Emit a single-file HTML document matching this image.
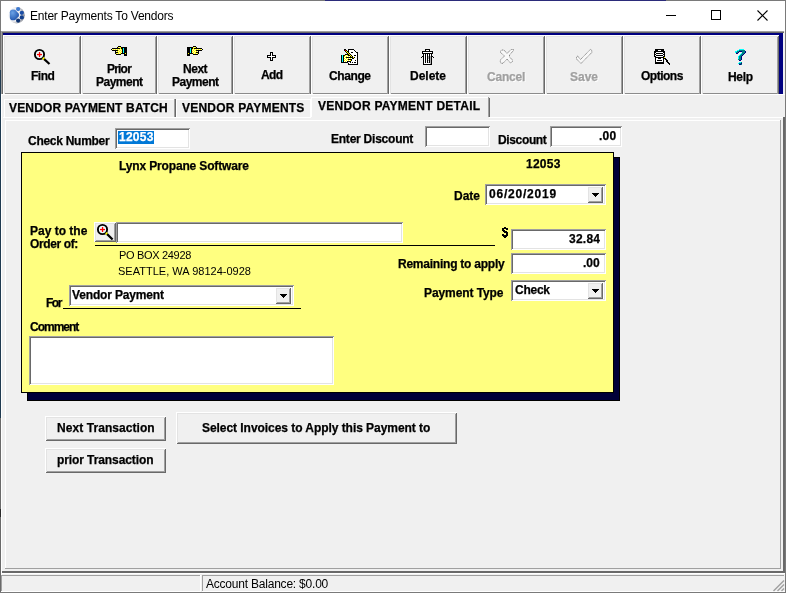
<!DOCTYPE html>
<html><head><meta charset="utf-8"><style>
html,body{margin:0;padding:0;width:786px;height:593px;overflow:hidden;background:#f0f0f0}
.a{position:absolute;box-sizing:border-box}
.t{position:absolute;will-change:transform;white-space:nowrap;font-family:"Liberation Sans",sans-serif;line-height:14px}
svg.a{overflow:visible}
</style></head><body>
<div class="a" style="left:0px;top:0px;width:786px;height:593px;background:#f0f0f0;"></div>
<div class="a" style="left:0px;top:0px;width:786px;height:31px;background:#fff;"></div>
<div class="a" style="left:0px;top:0px;width:786px;height:1px;background:#7a7a7a;"></div>
<div class="a" style="left:325px;top:0px;width:341px;height:1px;background:#2b2b7a;"></div>
<div class="a" style="left:0px;top:0px;width:1px;height:593px;background:#6a6a6a;"></div>
<div class="a" style="left:0px;top:70px;width:1px;height:348px;background:#1f3a50;"></div>
<div class="a" style="left:0px;top:509px;width:1px;height:8px;background:#2a2a2a;"></div>
<div class="a" style="left:0px;top:0px;width:1px;height:31px;background:#7a7a7a;"></div>
<div class="a" style="left:785px;top:0px;width:1px;height:593px;background:#7a7a7a;"></div>
<svg class="a" style="left:0;top:0" width="30" height="30">
<defs><radialGradient id="g1" cx="0.3" cy="0.3" r="0.8"><stop offset="0" stop-color="#6aa2e6"/><stop offset="1" stop-color="#1a4ea8"/></radialGradient>
<radialGradient id="g2" cx="0.3" cy="0.45" r="0.75"><stop offset="0" stop-color="#ffffff"/><stop offset="0.55" stop-color="#f0f0f2"/><stop offset="1" stop-color="#7a7e88"/></radialGradient></defs>
<circle cx="16.6" cy="15.2" r="8.2" fill="url(#g2)"/>
<path d="M9.8 12.2 Q10 9.6 13 9.6 L15.2 9.8 L18.6 13.6 Q19.6 15 18.6 16.6 L15.2 20 Q13 20.6 11 20.1 Q9.8 19.2 9.8 17z" fill="url(#g1)"/>
<circle cx="18.1" cy="9.1" r="2.1" fill="#3f7ad0"/>
<circle cx="21.8" cy="12.8" r="2.1" fill="#1c4ea6"/>
<circle cx="21.8" cy="17.4" r="2.1" fill="#123e8c"/>
<circle cx="18.1" cy="20.6" r="2.1" fill="#0c3272"/>
</svg>
<div class="t" style="left:0;top:0"></div>
<svg class="a" style="left:660px;top:6px" width="120" height="20" shape-rendering="crispEdges"><rect x="6" y="9" width="10" height="1" fill="#000"/><rect x="51.5" y="4.5" width="9" height="9" fill="none" stroke="#000" stroke-width="1"/></svg>
<svg class="a" style="left:752px;top:6px" width="20" height="20"><path d="M5.5 4.5 L15.5 14.5 M15.5 4.5 L5.5 14.5" stroke="#000" stroke-width="1.1"/></svg>
<div class="a" style="left:1px;top:31px;width:783px;height:1px;background:#a0a0a0;"></div>
<div class="a" style="left:1px;top:32px;width:783px;height:1px;background:#696969;"></div>
<div class="a" style="left:1px;top:31px;width:1px;height:63px;background:#a0a0a0;"></div>
<div class="a" style="left:2px;top:32px;width:1px;height:62px;background:#696969;"></div>
<div class="a" style="left:3px;top:33px;width:780px;height:61px;background:#000080;"></div>
<div class="a" style="left:3px;top:35px;width:78px;height:59px;background:#f0f0f0;box-shadow:inset 1px 1px 0 #fff, inset -1px 0 0 #696969, inset 2px 2px 0 #e3e3e3, inset -2px 0 0 #a0a0a0, inset 0 -1px 0 #8c8c8c"></div>
<div class="a" style="left:81px;top:35px;width:76px;height:59px;background:#f0f0f0;box-shadow:inset 1px 1px 0 #fff, inset -1px 0 0 #696969, inset 2px 2px 0 #e3e3e3, inset -2px 0 0 #a0a0a0, inset 0 -1px 0 #8c8c8c"></div>
<div class="a" style="left:157px;top:35px;width:76px;height:59px;background:#f0f0f0;box-shadow:inset 1px 1px 0 #fff, inset -1px 0 0 #696969, inset 2px 2px 0 #e3e3e3, inset -2px 0 0 #a0a0a0, inset 0 -1px 0 #8c8c8c"></div>
<div class="a" style="left:233px;top:35px;width:78px;height:59px;background:#f0f0f0;box-shadow:inset 1px 1px 0 #fff, inset -1px 0 0 #696969, inset 2px 2px 0 #e3e3e3, inset -2px 0 0 #a0a0a0, inset 0 -1px 0 #8c8c8c"></div>
<div class="a" style="left:311px;top:35px;width:78px;height:59px;background:#f0f0f0;box-shadow:inset 1px 1px 0 #fff, inset -1px 0 0 #696969, inset 2px 2px 0 #e3e3e3, inset -2px 0 0 #a0a0a0, inset 0 -1px 0 #8c8c8c"></div>
<div class="a" style="left:389px;top:35px;width:78px;height:59px;background:#f0f0f0;box-shadow:inset 1px 1px 0 #fff, inset -1px 0 0 #696969, inset 2px 2px 0 #e3e3e3, inset -2px 0 0 #a0a0a0, inset 0 -1px 0 #8c8c8c"></div>
<div class="a" style="left:467px;top:35px;width:78px;height:59px;background:#f0f0f0;box-shadow:inset 1px 1px 0 #fff, inset -1px 0 0 #696969, inset 2px 2px 0 #e3e3e3, inset -2px 0 0 #a0a0a0, inset 0 -1px 0 #8c8c8c"></div>
<div class="a" style="left:545px;top:35px;width:78px;height:59px;background:#f0f0f0;box-shadow:inset 1px 1px 0 #fff, inset -1px 0 0 #696969, inset 2px 2px 0 #e3e3e3, inset -2px 0 0 #a0a0a0, inset 0 -1px 0 #8c8c8c"></div>
<div class="a" style="left:623px;top:35px;width:78px;height:59px;background:#f0f0f0;box-shadow:inset 1px 1px 0 #fff, inset -1px 0 0 #696969, inset 2px 2px 0 #e3e3e3, inset -2px 0 0 #a0a0a0, inset 0 -1px 0 #8c8c8c"></div>
<div class="a" style="left:701px;top:35px;width:78px;height:59px;background:#f0f0f0;box-shadow:inset 1px 1px 0 #fff, inset -1px 0 0 #696969, inset 2px 2px 0 #e3e3e3, inset -2px 0 0 #a0a0a0, inset 0 -1px 0 #8c8c8c"></div>
<div class="a" style="left:1px;top:94px;width:784px;height:1px;background:#fff;"></div>
<div class="a" style="left:783px;top:33px;width:2px;height:61px;background:#f0f0f0;"></div>
<div class="a" style="left:1px;top:95px;width:1px;height:498px;background:#fff;"></div>
<div class="a" style="left:4px;top:99px;width:171px;height:18px;box-shadow:inset 1px 1px 0 #fff"></div>
<div class="a" style="left:174px;top:99px;width:1px;height:18px;background:#a0a0a0;"></div>
<div class="a" style="left:175px;top:99px;width:1px;height:18px;background:#696969;"></div>
<div class="a" style="left:176px;top:99px;width:135px;height:19px;box-shadow:inset 1px 1px 0 #fff, inset -1px -1px 0 #fff"></div>
<div class="a" style="left:311px;top:97px;width:1px;height:20px;background:#fff;"></div>
<div class="a" style="left:311px;top:97px;width:178px;height:1px;background:#fff;"></div>
<div class="a" style="left:488px;top:97px;width:1px;height:20px;background:#a0a0a0;"></div>
<div class="a" style="left:489px;top:98px;width:1px;height:19px;background:#696969;"></div>
<div class="a" style="left:489px;top:117px;width:295px;height:1px;background:#fff;"></div>
<div class="a" style="left:2px;top:117px;width:309px;height:1px;background:#fff;"></div>
<div class="a" style="left:2px;top:117px;width:1px;height:456px;background:#f0f0f0;"></div>
<div class="a" style="left:2px;top:571px;width:783px;height:2px;background:#696969;"></div>
<div class="a" style="left:783px;top:117px;width:2px;height:456px;background:#696969;"></div>
<div class="a" style="left:5px;top:120px;width:776px;height:1px;background:#fff;"></div>
<div class="a" style="left:5px;top:120px;width:1px;height:449px;background:#fff;"></div>
<div class="a" style="left:5px;top:568px;width:776px;height:1px;background:#a0a0a0;"></div>
<div class="a" style="left:780px;top:120px;width:1px;height:449px;background:#a0a0a0;"></div>
<div class="a" style="left:115px;top:128px;width:75px;height:21px;background:#fff;box-shadow:inset 1px 1px 0 #a0a0a0, inset -1px -1px 0 #fff, inset 2px 2px 0 #696969, inset -2px -2px 0 #e3e3e3"></div>
<div class="a" style="left:118px;top:131px;width:36px;height:13px;background:#0078d7;"></div>
<div class="a" style="left:425px;top:126px;width:65px;height:21px;background:#fff;box-shadow:inset 1px 1px 0 #a0a0a0, inset -1px -1px 0 #fff, inset 2px 2px 0 #696969, inset -2px -2px 0 #e3e3e3"></div>
<div class="a" style="left:550px;top:126px;width:72px;height:21px;background:#fff;box-shadow:inset 1px 1px 0 #a0a0a0, inset -1px -1px 0 #fff, inset 2px 2px 0 #696969, inset -2px -2px 0 #e3e3e3"></div>
<div class="a" style="left:27px;top:157px;width:593px;height:244px;background:#000038;border:1px solid #000;box-sizing:border-box"></div>
<div class="a" style="left:21px;top:152px;width:593px;height:241px;background:#ffff80;border:1px solid #000;box-sizing:border-box"></div>
<div class="a" style="left:485px;top:184px;width:121px;height:21px;background:#fff;box-shadow:inset 1px 1px 0 #a0a0a0, inset -1px -1px 0 #fff, inset 2px 2px 0 #696969, inset -2px -2px 0 #e3e3e3"></div><div class="a" style="left:587px;top:186px;width:16px;height:17px;background:#f0f0f0;box-shadow:inset 1px 1px 0 #fff, inset -1px -1px 0 #696969, inset 2px 2px 0 #e3e3e3, inset -2px -2px 0 #a0a0a0"></div><svg class="a" style="left:587px;top:186px" width="16" height="17" shape-rendering="crispEdges"><path d="M4.5 7h7v1h-1v1h-1v1h-1v1h-1v-1h-1v-1h-1v-1h-1z" fill="#000"/></svg>
<div class="a" style="left:94px;top:222px;width:22px;height:20px;background:#f0f0f0;box-shadow:inset 1px 1px 0 #fff, inset -1px -1px 0 #696969, inset 2px 2px 0 #e3e3e3, inset -2px -2px 0 #a0a0a0"></div>
<div class="a" style="left:116px;top:222px;width:287px;height:21px;background:#fff;box-shadow:inset 1px 1px 0 #a0a0a0, inset -1px -1px 0 #fff, inset 2px 2px 0 #696969, inset -2px -2px 0 #e3e3e3"></div>
<div class="a" style="left:95px;top:245px;width:400px;height:1px;background:#000;"></div>
<svg class="a" style="left:502px;top:227px" width="6" height="11" shape-rendering="crispEdges"><rect x="2" y="0" width="1" height="1"/><rect x="3" y="0" width="1" height="1"/><rect x="0" y="1" width="1" height="1"/><rect x="1" y="1" width="1" height="1"/><rect x="2" y="1" width="1" height="1"/><rect x="3" y="1" width="1" height="1"/><rect x="4" y="1" width="1" height="1"/><rect x="5" y="1" width="1" height="1"/><rect x="0" y="2" width="1" height="1"/><rect x="1" y="2" width="1" height="1"/><rect x="4" y="2" width="1" height="1"/><rect x="5" y="2" width="1" height="1"/><rect x="0" y="3" width="1" height="1"/><rect x="1" y="3" width="1" height="1"/><rect x="2" y="3" width="1" height="1"/><rect x="1" y="4" width="1" height="1"/><rect x="2" y="4" width="1" height="1"/><rect x="3" y="4" width="1" height="1"/><rect x="4" y="4" width="1" height="1"/><rect x="2" y="5" width="1" height="1"/><rect x="3" y="5" width="1" height="1"/><rect x="4" y="5" width="1" height="1"/><rect x="5" y="5" width="1" height="1"/><rect x="4" y="6" width="1" height="1"/><rect x="5" y="6" width="1" height="1"/><rect x="0" y="7" width="1" height="1"/><rect x="1" y="7" width="1" height="1"/><rect x="4" y="7" width="1" height="1"/><rect x="5" y="7" width="1" height="1"/><rect x="0" y="8" width="1" height="1"/><rect x="1" y="8" width="1" height="1"/><rect x="2" y="8" width="1" height="1"/><rect x="3" y="8" width="1" height="1"/><rect x="4" y="8" width="1" height="1"/><rect x="5" y="8" width="1" height="1"/><rect x="1" y="9" width="1" height="1"/><rect x="2" y="9" width="1" height="1"/><rect x="3" y="9" width="1" height="1"/><rect x="4" y="9" width="1" height="1"/><rect x="2" y="10" width="1" height="1"/><rect x="3" y="10" width="1" height="1"/></svg>
<div class="a" style="left:511px;top:229px;width:95px;height:21px;background:#fff;box-shadow:inset 1px 1px 0 #a0a0a0, inset -1px -1px 0 #fff, inset 2px 2px 0 #696969, inset -2px -2px 0 #e3e3e3"></div>
<div class="a" style="left:511px;top:253px;width:95px;height:21px;background:#fff;box-shadow:inset 1px 1px 0 #a0a0a0, inset -1px -1px 0 #fff, inset 2px 2px 0 #696969, inset -2px -2px 0 #e3e3e3"></div>
<div class="a" style="left:511px;top:280px;width:95px;height:21px;background:#fff;box-shadow:inset 1px 1px 0 #a0a0a0, inset -1px -1px 0 #fff, inset 2px 2px 0 #696969, inset -2px -2px 0 #e3e3e3"></div><div class="a" style="left:587px;top:282px;width:16px;height:17px;background:#f0f0f0;box-shadow:inset 1px 1px 0 #fff, inset -1px -1px 0 #696969, inset 2px 2px 0 #e3e3e3, inset -2px -2px 0 #a0a0a0"></div><svg class="a" style="left:587px;top:282px" width="16" height="17" shape-rendering="crispEdges"><path d="M4.5 7h7v1h-1v1h-1v1h-1v1h-1v-1h-1v-1h-1v-1h-1z" fill="#000"/></svg>
<div class="a" style="left:69px;top:285px;width:225px;height:21px;background:#fff;box-shadow:inset 1px 1px 0 #a0a0a0, inset -1px -1px 0 #fff, inset 2px 2px 0 #696969, inset -2px -2px 0 #e3e3e3"></div><div class="a" style="left:275px;top:287px;width:16px;height:17px;background:#f0f0f0;box-shadow:inset 1px 1px 0 #fff, inset -1px -1px 0 #696969, inset 2px 2px 0 #e3e3e3, inset -2px -2px 0 #a0a0a0"></div><svg class="a" style="left:275px;top:287px" width="16" height="17" shape-rendering="crispEdges"><path d="M4.5 7h7v1h-1v1h-1v1h-1v1h-1v-1h-1v-1h-1v-1h-1z" fill="#000"/></svg>
<div class="a" style="left:63px;top:308px;width:238px;height:1px;background:#000;"></div>
<div class="a" style="left:29px;top:336px;width:305px;height:49px;background:#fff;box-shadow:inset 1px 1px 0 #a0a0a0, inset -1px -1px 0 #fff, inset 2px 2px 0 #696969, inset -2px -2px 0 #e3e3e3"></div>
<div class="a" style="left:45px;top:416px;width:121px;height:25px;background:#f0f0f0;box-shadow:inset 1px 1px 0 #fff, inset -1px -1px 0 #696969, inset 2px 2px 0 #e3e3e3, inset -2px -2px 0 #a0a0a0"></div>
<div class="a" style="left:45px;top:448px;width:121px;height:25px;background:#f0f0f0;box-shadow:inset 1px 1px 0 #fff, inset -1px -1px 0 #696969, inset 2px 2px 0 #e3e3e3, inset -2px -2px 0 #a0a0a0"></div>
<div class="a" style="left:176px;top:412px;width:281px;height:32px;background:#f0f0f0;box-shadow:inset 1px 1px 0 #fff, inset -1px -1px 0 #696969, inset 2px 2px 0 #e3e3e3, inset -2px -2px 0 #a0a0a0"></div>
<div class="a" style="left:1px;top:573px;width:784px;height:1px;background:#fff;"></div>
<div class="a" style="left:1px;top:575px;width:200px;height:1px;background:#a0a0a0;"></div>
<div class="a" style="left:1px;top:575px;width:1px;height:17px;background:#a0a0a0;"></div>
<div class="a" style="left:1px;top:591px;width:200px;height:1px;background:#fff;"></div>
<div class="a" style="left:200px;top:575px;width:1px;height:17px;background:#fff;"></div>
<div class="a" style="left:202px;top:575px;width:582px;height:1px;background:#a0a0a0;"></div>
<div class="a" style="left:202px;top:575px;width:1px;height:17px;background:#a0a0a0;"></div>
<div class="a" style="left:202px;top:591px;width:583px;height:1px;background:#fff;"></div>
<div class="a" style="left:0px;top:592px;width:786px;height:1px;background:#7a7a7a;"></div>
<svg class="a" style="left:0;top:0" width="786" height="593"><path d="M773.5 591 L784 580.5 M777.5 591 L784 584.5 M781.5 591 L784 588.5" stroke="#a0a0a0" stroke-width="1.4"/></svg>
<svg class="a" style="left:0;top:0" width="786" height="593" shape-rendering="crispEdges"></svg><svg class="a" style="left:0;top:0" width="786" height="593"><circle cx="39.5" cy="54.5" r="4.6" fill="#eefafa" stroke="#000" stroke-width="1.9"/><rect x="37.0" y="53.9" width="5" height="1.3" fill="#ff0000"/><rect x="38.9" y="52.0" width="1.3" height="5" fill="#ff0000"/><path d="M43.1 58.1 L49.5 64" stroke="#000" stroke-width="2.2"/><path d="M42.9 57.9 L44.1 59.1" stroke="#ffff00" stroke-width="2.2"/></svg><svg class="a" style="left:0;top:0" width="786" height="593" shape-rendering="crispEdges"></svg><svg class="a" style="left:0;top:0" width="786" height="593"><circle cx="102.5" cy="229.5" r="4.6" fill="#eefafa" stroke="#000" stroke-width="1.9"/><rect x="100.0" y="228.9" width="5" height="1.3" fill="#ff0000"/><rect x="101.9" y="227.0" width="1.3" height="5" fill="#ff0000"/><path d="M106.1 233.1 L112.6 239.5" stroke="#000" stroke-width="2.2"/><path d="M105.9 232.9 L107.1 234.1" stroke="#ffff00" stroke-width="2.2"/></svg><svg class="a" style="left:0;top:0" width="786" height="593" shape-rendering="crispEdges"><rect x="193" y="46" width="1" height="1" fill="#000"/><rect x="194" y="46" width="1" height="1" fill="#000"/><rect x="195" y="46" width="1" height="1" fill="#000"/><rect x="187" y="47" width="1" height="1" fill="#000"/><rect x="188" y="47" width="1" height="1" fill="#000"/><rect x="189" y="47" width="1" height="1" fill="#000"/><rect x="190" y="47" width="1" height="1" fill="#000"/><rect x="191" y="47" width="1" height="1" fill="#000"/><rect x="192" y="47" width="1" height="1" fill="#000"/><rect x="193" y="47" width="1" height="1" fill="#ffff00"/><rect x="194" y="47" width="1" height="1" fill="#fff8b0"/><rect x="195" y="47" width="1" height="1" fill="#ffff00"/><rect x="196" y="47" width="1" height="1" fill="#000"/><rect x="187" y="48" width="1" height="1" fill="#000"/><rect x="188" y="48" width="1" height="1" fill="#000"/><rect x="189" y="48" width="1" height="1" fill="#000"/><rect x="190" y="48" width="1" height="1" fill="#00ffff"/><rect x="191" y="48" width="1" height="1" fill="#000"/><rect x="192" y="48" width="1" height="1" fill="#000"/><rect x="193" y="48" width="1" height="1" fill="#ffff00"/><rect x="194" y="48" width="1" height="1" fill="#000"/><rect x="195" y="48" width="1" height="1" fill="#000"/><rect x="196" y="48" width="1" height="1" fill="#000"/><rect x="197" y="48" width="1" height="1" fill="#000"/><rect x="198" y="48" width="1" height="1" fill="#000"/><rect x="199" y="48" width="1" height="1" fill="#000"/><rect x="200" y="48" width="1" height="1" fill="#000"/><rect x="201" y="48" width="1" height="1" fill="#000"/><rect x="187" y="49" width="1" height="1" fill="#000"/><rect x="188" y="49" width="1" height="1" fill="#000"/><rect x="189" y="49" width="1" height="1" fill="#000"/><rect x="190" y="49" width="1" height="1" fill="#00ffff"/><rect x="191" y="49" width="1" height="1" fill="#000"/><rect x="192" y="49" width="1" height="1" fill="#ffff00"/><rect x="193" y="49" width="1" height="1" fill="#fff8b0"/><rect x="194" y="49" width="1" height="1" fill="#ffff00"/><rect x="195" y="49" width="1" height="1" fill="#fff8b0"/><rect x="196" y="49" width="1" height="1" fill="#ffff00"/><rect x="197" y="49" width="1" height="1" fill="#fff8b0"/><rect x="198" y="49" width="1" height="1" fill="#ffff00"/><rect x="199" y="49" width="1" height="1" fill="#fff8b0"/><rect x="200" y="49" width="1" height="1" fill="#ffff00"/><rect x="201" y="49" width="1" height="1" fill="#fff8b0"/><rect x="202" y="49" width="1" height="1" fill="#000"/><rect x="187" y="50" width="1" height="1" fill="#000"/><rect x="188" y="50" width="1" height="1" fill="#000"/><rect x="189" y="50" width="1" height="1" fill="#000"/><rect x="190" y="50" width="1" height="1" fill="#00ffff"/><rect x="191" y="50" width="1" height="1" fill="#000"/><rect x="192" y="50" width="1" height="1" fill="#fff8b0"/><rect x="193" y="50" width="1" height="1" fill="#ffff00"/><rect x="194" y="50" width="1" height="1" fill="#fff8b0"/><rect x="195" y="50" width="1" height="1" fill="#ffff00"/><rect x="196" y="50" width="1" height="1" fill="#000"/><rect x="197" y="50" width="1" height="1" fill="#000"/><rect x="198" y="50" width="1" height="1" fill="#000"/><rect x="199" y="50" width="1" height="1" fill="#000"/><rect x="200" y="50" width="1" height="1" fill="#000"/><rect x="201" y="50" width="1" height="1" fill="#000"/><rect x="187" y="51" width="1" height="1" fill="#000"/><rect x="188" y="51" width="1" height="1" fill="#000"/><rect x="189" y="51" width="1" height="1" fill="#000"/><rect x="190" y="51" width="1" height="1" fill="#00ffff"/><rect x="191" y="51" width="1" height="1" fill="#000"/><rect x="192" y="51" width="1" height="1" fill="#ffff00"/><rect x="193" y="51" width="1" height="1" fill="#fff8b0"/><rect x="194" y="51" width="1" height="1" fill="#ffff00"/><rect x="195" y="51" width="1" height="1" fill="#fff8b0"/><rect x="196" y="51" width="1" height="1" fill="#ffff00"/><rect x="197" y="51" width="1" height="1" fill="#fff8b0"/><rect x="198" y="51" width="1" height="1" fill="#000"/><rect x="187" y="52" width="1" height="1" fill="#000"/><rect x="188" y="52" width="1" height="1" fill="#000"/><rect x="189" y="52" width="1" height="1" fill="#000"/><rect x="190" y="52" width="1" height="1" fill="#00ffff"/><rect x="191" y="52" width="1" height="1" fill="#000"/><rect x="192" y="52" width="1" height="1" fill="#fff8b0"/><rect x="193" y="52" width="1" height="1" fill="#ffff00"/><rect x="194" y="52" width="1" height="1" fill="#fff8b0"/><rect x="195" y="52" width="1" height="1" fill="#ffff00"/><rect x="196" y="52" width="1" height="1" fill="#000"/><rect x="197" y="52" width="1" height="1" fill="#000"/><rect x="198" y="52" width="1" height="1" fill="#000"/><rect x="187" y="53" width="1" height="1" fill="#000"/><rect x="188" y="53" width="1" height="1" fill="#ffff00"/><rect x="189" y="53" width="1" height="1" fill="#000"/><rect x="190" y="53" width="1" height="1" fill="#000"/><rect x="191" y="53" width="1" height="1" fill="#000"/><rect x="192" y="53" width="1" height="1" fill="#000"/><rect x="193" y="53" width="1" height="1" fill="#ffff00"/><rect x="194" y="53" width="1" height="1" fill="#fff8b0"/><rect x="195" y="53" width="1" height="1" fill="#ffff00"/><rect x="196" y="53" width="1" height="1" fill="#fff8b0"/><rect x="197" y="53" width="1" height="1" fill="#ffff00"/><rect x="198" y="53" width="1" height="1" fill="#000"/><rect x="187" y="54" width="1" height="1" fill="#000"/><rect x="188" y="54" width="1" height="1" fill="#000"/><rect x="189" y="54" width="1" height="1" fill="#000"/><rect x="193" y="54" width="1" height="1" fill="#000"/><rect x="194" y="54" width="1" height="1" fill="#000"/><rect x="195" y="54" width="1" height="1" fill="#000"/><rect x="196" y="54" width="1" height="1" fill="#000"/><rect x="197" y="54" width="1" height="1" fill="#000"/><rect x="187" y="55" width="1" height="1" fill="#000"/><rect x="188" y="55" width="1" height="1" fill="#000"/><rect x="189" y="55" width="1" height="1" fill="#000"/><rect x="118" y="46" width="1" height="1" fill="#000"/><rect x="119" y="46" width="1" height="1" fill="#000"/><rect x="120" y="46" width="1" height="1" fill="#000"/><rect x="117" y="47" width="1" height="1" fill="#000"/><rect x="118" y="47" width="1" height="1" fill="#ffff00"/><rect x="119" y="47" width="1" height="1" fill="#fff8b0"/><rect x="120" y="47" width="1" height="1" fill="#ffff00"/><rect x="121" y="47" width="1" height="1" fill="#000"/><rect x="122" y="47" width="1" height="1" fill="#000"/><rect x="123" y="47" width="1" height="1" fill="#000"/><rect x="124" y="47" width="1" height="1" fill="#000"/><rect x="125" y="47" width="1" height="1" fill="#000"/><rect x="126" y="47" width="1" height="1" fill="#000"/><rect x="112" y="48" width="1" height="1" fill="#000"/><rect x="113" y="48" width="1" height="1" fill="#000"/><rect x="114" y="48" width="1" height="1" fill="#000"/><rect x="115" y="48" width="1" height="1" fill="#000"/><rect x="116" y="48" width="1" height="1" fill="#000"/><rect x="117" y="48" width="1" height="1" fill="#000"/><rect x="118" y="48" width="1" height="1" fill="#000"/><rect x="119" y="48" width="1" height="1" fill="#000"/><rect x="120" y="48" width="1" height="1" fill="#ffff00"/><rect x="121" y="48" width="1" height="1" fill="#000"/><rect x="122" y="48" width="1" height="1" fill="#000"/><rect x="123" y="48" width="1" height="1" fill="#00ffff"/><rect x="124" y="48" width="1" height="1" fill="#000"/><rect x="125" y="48" width="1" height="1" fill="#000"/><rect x="126" y="48" width="1" height="1" fill="#000"/><rect x="111" y="49" width="1" height="1" fill="#000"/><rect x="112" y="49" width="1" height="1" fill="#fff8b0"/><rect x="113" y="49" width="1" height="1" fill="#ffff00"/><rect x="114" y="49" width="1" height="1" fill="#fff8b0"/><rect x="115" y="49" width="1" height="1" fill="#ffff00"/><rect x="116" y="49" width="1" height="1" fill="#fff8b0"/><rect x="117" y="49" width="1" height="1" fill="#ffff00"/><rect x="118" y="49" width="1" height="1" fill="#fff8b0"/><rect x="119" y="49" width="1" height="1" fill="#ffff00"/><rect x="120" y="49" width="1" height="1" fill="#fff8b0"/><rect x="121" y="49" width="1" height="1" fill="#ffff00"/><rect x="122" y="49" width="1" height="1" fill="#000"/><rect x="123" y="49" width="1" height="1" fill="#00ffff"/><rect x="124" y="49" width="1" height="1" fill="#000"/><rect x="125" y="49" width="1" height="1" fill="#000"/><rect x="126" y="49" width="1" height="1" fill="#000"/><rect x="112" y="50" width="1" height="1" fill="#000"/><rect x="113" y="50" width="1" height="1" fill="#000"/><rect x="114" y="50" width="1" height="1" fill="#000"/><rect x="115" y="50" width="1" height="1" fill="#000"/><rect x="116" y="50" width="1" height="1" fill="#000"/><rect x="117" y="50" width="1" height="1" fill="#000"/><rect x="118" y="50" width="1" height="1" fill="#ffff00"/><rect x="119" y="50" width="1" height="1" fill="#fff8b0"/><rect x="120" y="50" width="1" height="1" fill="#ffff00"/><rect x="121" y="50" width="1" height="1" fill="#fff8b0"/><rect x="122" y="50" width="1" height="1" fill="#000"/><rect x="123" y="50" width="1" height="1" fill="#00ffff"/><rect x="124" y="50" width="1" height="1" fill="#000"/><rect x="125" y="50" width="1" height="1" fill="#000"/><rect x="126" y="50" width="1" height="1" fill="#000"/><rect x="115" y="51" width="1" height="1" fill="#000"/><rect x="116" y="51" width="1" height="1" fill="#fff8b0"/><rect x="117" y="51" width="1" height="1" fill="#ffff00"/><rect x="118" y="51" width="1" height="1" fill="#fff8b0"/><rect x="119" y="51" width="1" height="1" fill="#ffff00"/><rect x="120" y="51" width="1" height="1" fill="#fff8b0"/><rect x="121" y="51" width="1" height="1" fill="#ffff00"/><rect x="122" y="51" width="1" height="1" fill="#000"/><rect x="123" y="51" width="1" height="1" fill="#00ffff"/><rect x="124" y="51" width="1" height="1" fill="#000"/><rect x="125" y="51" width="1" height="1" fill="#000"/><rect x="126" y="51" width="1" height="1" fill="#000"/><rect x="115" y="52" width="1" height="1" fill="#000"/><rect x="116" y="52" width="1" height="1" fill="#000"/><rect x="117" y="52" width="1" height="1" fill="#000"/><rect x="118" y="52" width="1" height="1" fill="#ffff00"/><rect x="119" y="52" width="1" height="1" fill="#fff8b0"/><rect x="120" y="52" width="1" height="1" fill="#ffff00"/><rect x="121" y="52" width="1" height="1" fill="#fff8b0"/><rect x="122" y="52" width="1" height="1" fill="#000"/><rect x="123" y="52" width="1" height="1" fill="#00ffff"/><rect x="124" y="52" width="1" height="1" fill="#000"/><rect x="125" y="52" width="1" height="1" fill="#000"/><rect x="126" y="52" width="1" height="1" fill="#000"/><rect x="115" y="53" width="1" height="1" fill="#000"/><rect x="116" y="53" width="1" height="1" fill="#ffff00"/><rect x="117" y="53" width="1" height="1" fill="#fff8b0"/><rect x="118" y="53" width="1" height="1" fill="#ffff00"/><rect x="119" y="53" width="1" height="1" fill="#fff8b0"/><rect x="120" y="53" width="1" height="1" fill="#ffff00"/><rect x="121" y="53" width="1" height="1" fill="#000"/><rect x="122" y="53" width="1" height="1" fill="#000"/><rect x="123" y="53" width="1" height="1" fill="#000"/><rect x="124" y="53" width="1" height="1" fill="#000"/><rect x="125" y="53" width="1" height="1" fill="#ffff00"/><rect x="126" y="53" width="1" height="1" fill="#000"/><rect x="116" y="54" width="1" height="1" fill="#000"/><rect x="117" y="54" width="1" height="1" fill="#000"/><rect x="118" y="54" width="1" height="1" fill="#000"/><rect x="119" y="54" width="1" height="1" fill="#000"/><rect x="120" y="54" width="1" height="1" fill="#000"/><rect x="124" y="54" width="1" height="1" fill="#000"/><rect x="125" y="54" width="1" height="1" fill="#000"/><rect x="126" y="54" width="1" height="1" fill="#000"/><rect x="124" y="55" width="1" height="1" fill="#000"/><rect x="125" y="55" width="1" height="1" fill="#000"/><rect x="126" y="55" width="1" height="1" fill="#000"/><rect x="270" y="52" width="1" height="1" fill="#000"/><rect x="271" y="52" width="1" height="1" fill="#000"/><rect x="272" y="52" width="1" height="1" fill="#000"/><rect x="270" y="53" width="1" height="1" fill="#000"/><rect x="271" y="53" width="1" height="1" fill="#ffffff"/><rect x="272" y="53" width="1" height="1" fill="#000"/><rect x="270" y="54" width="1" height="1" fill="#000"/><rect x="271" y="54" width="1" height="1" fill="#ffffff"/><rect x="272" y="54" width="1" height="1" fill="#000"/><rect x="267" y="55" width="1" height="1" fill="#000"/><rect x="268" y="55" width="1" height="1" fill="#000"/><rect x="269" y="55" width="1" height="1" fill="#000"/><rect x="270" y="55" width="1" height="1" fill="#000"/><rect x="271" y="55" width="1" height="1" fill="#ffffff"/><rect x="272" y="55" width="1" height="1" fill="#000"/><rect x="273" y="55" width="1" height="1" fill="#000"/><rect x="274" y="55" width="1" height="1" fill="#000"/><rect x="275" y="55" width="1" height="1" fill="#000"/><rect x="267" y="56" width="1" height="1" fill="#000"/><rect x="268" y="56" width="1" height="1" fill="#ffffff"/><rect x="269" y="56" width="1" height="1" fill="#ffffff"/><rect x="270" y="56" width="1" height="1" fill="#ffffff"/><rect x="271" y="56" width="1" height="1" fill="#ffffff"/><rect x="272" y="56" width="1" height="1" fill="#ffffff"/><rect x="273" y="56" width="1" height="1" fill="#ffffff"/><rect x="274" y="56" width="1" height="1" fill="#ffffff"/><rect x="275" y="56" width="1" height="1" fill="#000"/><rect x="267" y="57" width="1" height="1" fill="#000"/><rect x="268" y="57" width="1" height="1" fill="#000"/><rect x="269" y="57" width="1" height="1" fill="#000"/><rect x="270" y="57" width="1" height="1" fill="#000"/><rect x="271" y="57" width="1" height="1" fill="#ffffff"/><rect x="272" y="57" width="1" height="1" fill="#000"/><rect x="273" y="57" width="1" height="1" fill="#000"/><rect x="274" y="57" width="1" height="1" fill="#000"/><rect x="275" y="57" width="1" height="1" fill="#000"/><rect x="270" y="58" width="1" height="1" fill="#000"/><rect x="271" y="58" width="1" height="1" fill="#ffffff"/><rect x="272" y="58" width="1" height="1" fill="#000"/><rect x="270" y="59" width="1" height="1" fill="#000"/><rect x="271" y="59" width="1" height="1" fill="#ffffff"/><rect x="272" y="59" width="1" height="1" fill="#000"/><rect x="270" y="60" width="1" height="1" fill="#000"/><rect x="271" y="60" width="1" height="1" fill="#000"/><rect x="272" y="60" width="1" height="1" fill="#000"/><rect x="344" y="49" width="1" height="1" fill="#000"/><rect x="345" y="49" width="1" height="1" fill="#000"/><rect x="348" y="49" width="1" height="1" fill="#000"/><rect x="349" y="49" width="1" height="1" fill="#000"/><rect x="350" y="49" width="1" height="1" fill="#000"/><rect x="351" y="49" width="1" height="1" fill="#000"/><rect x="352" y="49" width="1" height="1" fill="#000"/><rect x="353" y="49" width="1" height="1" fill="#000"/><rect x="344" y="50" width="1" height="1" fill="#000"/><rect x="345" y="50" width="1" height="1" fill="#ff0000"/><rect x="346" y="50" width="1" height="1" fill="#000"/><rect x="348" y="50" width="1" height="1" fill="#000"/><rect x="349" y="50" width="1" height="1" fill="#ffffff"/><rect x="350" y="50" width="1" height="1" fill="#ffffff"/><rect x="351" y="50" width="1" height="1" fill="#ffffff"/><rect x="352" y="50" width="1" height="1" fill="#ffffff"/><rect x="353" y="50" width="1" height="1" fill="#ffffff"/><rect x="354" y="50" width="1" height="1" fill="#000"/><rect x="345" y="51" width="1" height="1" fill="#000"/><rect x="346" y="51" width="1" height="1" fill="#ffff00"/><rect x="347" y="51" width="1" height="1" fill="#000"/><rect x="348" y="51" width="1" height="1" fill="#000"/><rect x="349" y="51" width="1" height="1" fill="#ffffff"/><rect x="350" y="51" width="1" height="1" fill="#ffffff"/><rect x="351" y="51" width="1" height="1" fill="#ffffff"/><rect x="352" y="51" width="1" height="1" fill="#ffffff"/><rect x="353" y="51" width="1" height="1" fill="#ffffff"/><rect x="354" y="51" width="1" height="1" fill="#ffffff"/><rect x="355" y="51" width="1" height="1" fill="#000"/><rect x="346" y="52" width="1" height="1" fill="#000"/><rect x="347" y="52" width="1" height="1" fill="#ffff00"/><rect x="348" y="52" width="1" height="1" fill="#000"/><rect x="349" y="52" width="1" height="1" fill="#ffffff"/><rect x="350" y="52" width="1" height="1" fill="#ffffff"/><rect x="351" y="52" width="1" height="1" fill="#000"/><rect x="352" y="52" width="1" height="1" fill="#000"/><rect x="353" y="52" width="1" height="1" fill="#ffffff"/><rect x="354" y="52" width="1" height="1" fill="#ffffff"/><rect x="355" y="52" width="1" height="1" fill="#ffffff"/><rect x="356" y="52" width="1" height="1" fill="#000"/><rect x="357" y="52" width="1" height="1" fill="#000"/><rect x="347" y="53" width="1" height="1" fill="#000"/><rect x="348" y="53" width="1" height="1" fill="#ffff00"/><rect x="349" y="53" width="1" height="1" fill="#000"/><rect x="350" y="53" width="1" height="1" fill="#ffffff"/><rect x="351" y="53" width="1" height="1" fill="#ffffff"/><rect x="352" y="53" width="1" height="1" fill="#ffffff"/><rect x="353" y="53" width="1" height="1" fill="#ffffff"/><rect x="354" y="53" width="1" height="1" fill="#ffffff"/><rect x="355" y="53" width="1" height="1" fill="#ffffff"/><rect x="356" y="53" width="1" height="1" fill="#ffffff"/><rect x="357" y="53" width="1" height="1" fill="#000"/><rect x="345" y="54" width="1" height="1" fill="#000"/><rect x="346" y="54" width="1" height="1" fill="#000"/><rect x="347" y="54" width="1" height="1" fill="#000"/><rect x="348" y="54" width="1" height="1" fill="#000"/><rect x="349" y="54" width="1" height="1" fill="#ffff00"/><rect x="350" y="54" width="1" height="1" fill="#000"/><rect x="351" y="54" width="1" height="1" fill="#ffffff"/><rect x="352" y="54" width="1" height="1" fill="#ffffff"/><rect x="353" y="54" width="1" height="1" fill="#ffffff"/><rect x="354" y="54" width="1" height="1" fill="#ffffff"/><rect x="355" y="54" width="1" height="1" fill="#ffffff"/><rect x="356" y="54" width="1" height="1" fill="#ffffff"/><rect x="357" y="54" width="1" height="1" fill="#000"/><rect x="341" y="55" width="1" height="1" fill="#000"/><rect x="342" y="55" width="1" height="1" fill="#00ffff"/><rect x="343" y="55" width="1" height="1" fill="#000"/><rect x="344" y="55" width="1" height="1" fill="#000"/><rect x="345" y="55" width="1" height="1" fill="#ffff00"/><rect x="346" y="55" width="1" height="1" fill="#ffffff"/><rect x="347" y="55" width="1" height="1" fill="#ffff00"/><rect x="348" y="55" width="1" height="1" fill="#000"/><rect x="349" y="55" width="1" height="1" fill="#000"/><rect x="350" y="55" width="1" height="1" fill="#ffff00"/><rect x="351" y="55" width="1" height="1" fill="#000"/><rect x="352" y="55" width="1" height="1" fill="#ffffff"/><rect x="353" y="55" width="1" height="1" fill="#ffffff"/><rect x="354" y="55" width="1" height="1" fill="#000"/><rect x="355" y="55" width="1" height="1" fill="#000"/><rect x="356" y="55" width="1" height="1" fill="#ffffff"/><rect x="357" y="55" width="1" height="1" fill="#000"/><rect x="341" y="56" width="1" height="1" fill="#000"/><rect x="342" y="56" width="1" height="1" fill="#00ffff"/><rect x="343" y="56" width="1" height="1" fill="#000"/><rect x="344" y="56" width="1" height="1" fill="#ffff00"/><rect x="345" y="56" width="1" height="1" fill="#ffffff"/><rect x="346" y="56" width="1" height="1" fill="#ffff00"/><rect x="347" y="56" width="1" height="1" fill="#ffffff"/><rect x="348" y="56" width="1" height="1" fill="#ffff00"/><rect x="349" y="56" width="1" height="1" fill="#ffffff"/><rect x="350" y="56" width="1" height="1" fill="#000"/><rect x="351" y="56" width="1" height="1" fill="#ffff00"/><rect x="352" y="56" width="1" height="1" fill="#000"/><rect x="353" y="56" width="1" height="1" fill="#ffffff"/><rect x="354" y="56" width="1" height="1" fill="#ffffff"/><rect x="355" y="56" width="1" height="1" fill="#ffffff"/><rect x="356" y="56" width="1" height="1" fill="#ffffff"/><rect x="357" y="56" width="1" height="1" fill="#000"/><rect x="341" y="57" width="1" height="1" fill="#000"/><rect x="342" y="57" width="1" height="1" fill="#00ffff"/><rect x="343" y="57" width="1" height="1" fill="#000"/><rect x="344" y="57" width="1" height="1" fill="#ffffff"/><rect x="345" y="57" width="1" height="1" fill="#ffff00"/><rect x="346" y="57" width="1" height="1" fill="#000"/><rect x="347" y="57" width="1" height="1" fill="#000"/><rect x="348" y="57" width="1" height="1" fill="#000"/><rect x="349" y="57" width="1" height="1" fill="#000"/><rect x="350" y="57" width="1" height="1" fill="#000"/><rect x="351" y="57" width="1" height="1" fill="#000"/><rect x="352" y="57" width="1" height="1" fill="#000"/><rect x="353" y="57" width="1" height="1" fill="#ffff00"/><rect x="354" y="57" width="1" height="1" fill="#000"/><rect x="355" y="57" width="1" height="1" fill="#ffffff"/><rect x="356" y="57" width="1" height="1" fill="#ffffff"/><rect x="357" y="57" width="1" height="1" fill="#000"/><rect x="341" y="58" width="1" height="1" fill="#000"/><rect x="342" y="58" width="1" height="1" fill="#00ffff"/><rect x="343" y="58" width="1" height="1" fill="#000"/><rect x="344" y="58" width="1" height="1" fill="#ffff00"/><rect x="345" y="58" width="1" height="1" fill="#ffffff"/><rect x="346" y="58" width="1" height="1" fill="#ffff00"/><rect x="347" y="58" width="1" height="1" fill="#ffffff"/><rect x="348" y="58" width="1" height="1" fill="#ffff00"/><rect x="349" y="58" width="1" height="1" fill="#ffffff"/><rect x="350" y="58" width="1" height="1" fill="#ffff00"/><rect x="351" y="58" width="1" height="1" fill="#ffffff"/><rect x="352" y="58" width="1" height="1" fill="#000"/><rect x="353" y="58" width="1" height="1" fill="#000"/><rect x="354" y="58" width="1" height="1" fill="#ffffff"/><rect x="355" y="58" width="1" height="1" fill="#ffffff"/><rect x="356" y="58" width="1" height="1" fill="#ffffff"/><rect x="357" y="58" width="1" height="1" fill="#000"/><rect x="341" y="59" width="1" height="1" fill="#000"/><rect x="342" y="59" width="1" height="1" fill="#00ffff"/><rect x="343" y="59" width="1" height="1" fill="#000"/><rect x="344" y="59" width="1" height="1" fill="#ffffff"/><rect x="345" y="59" width="1" height="1" fill="#ffff00"/><rect x="346" y="59" width="1" height="1" fill="#ffffff"/><rect x="347" y="59" width="1" height="1" fill="#ffff00"/><rect x="348" y="59" width="1" height="1" fill="#000"/><rect x="349" y="59" width="1" height="1" fill="#000"/><rect x="350" y="59" width="1" height="1" fill="#000"/><rect x="351" y="59" width="1" height="1" fill="#000"/><rect x="352" y="59" width="1" height="1" fill="#ffffff"/><rect x="353" y="59" width="1" height="1" fill="#ffffff"/><rect x="354" y="59" width="1" height="1" fill="#ffffff"/><rect x="355" y="59" width="1" height="1" fill="#ffffff"/><rect x="356" y="59" width="1" height="1" fill="#ffffff"/><rect x="357" y="59" width="1" height="1" fill="#000"/><rect x="341" y="60" width="1" height="1" fill="#000"/><rect x="342" y="60" width="1" height="1" fill="#00ffff"/><rect x="343" y="60" width="1" height="1" fill="#000"/><rect x="344" y="60" width="1" height="1" fill="#ffff00"/><rect x="345" y="60" width="1" height="1" fill="#ffffff"/><rect x="346" y="60" width="1" height="1" fill="#ffff00"/><rect x="347" y="60" width="1" height="1" fill="#ffffff"/><rect x="348" y="60" width="1" height="1" fill="#ffff00"/><rect x="349" y="60" width="1" height="1" fill="#ffffff"/><rect x="350" y="60" width="1" height="1" fill="#ffff00"/><rect x="351" y="60" width="1" height="1" fill="#000"/><rect x="352" y="60" width="1" height="1" fill="#ffffff"/><rect x="353" y="60" width="1" height="1" fill="#ffffff"/><rect x="354" y="60" width="1" height="1" fill="#ffffff"/><rect x="355" y="60" width="1" height="1" fill="#000"/><rect x="356" y="60" width="1" height="1" fill="#ffffff"/><rect x="357" y="60" width="1" height="1" fill="#000"/><rect x="341" y="61" width="1" height="1" fill="#000"/><rect x="342" y="61" width="1" height="1" fill="#00ffff"/><rect x="343" y="61" width="1" height="1" fill="#000"/><rect x="344" y="61" width="1" height="1" fill="#ffffff"/><rect x="345" y="61" width="1" height="1" fill="#ffff00"/><rect x="346" y="61" width="1" height="1" fill="#ffffff"/><rect x="347" y="61" width="1" height="1" fill="#000"/><rect x="348" y="61" width="1" height="1" fill="#000"/><rect x="349" y="61" width="1" height="1" fill="#000"/><rect x="350" y="61" width="1" height="1" fill="#000"/><rect x="351" y="61" width="1" height="1" fill="#ffffff"/><rect x="352" y="61" width="1" height="1" fill="#ffffff"/><rect x="353" y="61" width="1" height="1" fill="#ffffff"/><rect x="354" y="61" width="1" height="1" fill="#ffffff"/><rect x="355" y="61" width="1" height="1" fill="#ffffff"/><rect x="356" y="61" width="1" height="1" fill="#ffffff"/><rect x="357" y="61" width="1" height="1" fill="#000"/><rect x="341" y="62" width="1" height="1" fill="#000"/><rect x="342" y="62" width="1" height="1" fill="#000"/><rect x="343" y="62" width="1" height="1" fill="#000"/><rect x="344" y="62" width="1" height="1" fill="#000"/><rect x="345" y="62" width="1" height="1" fill="#000"/><rect x="346" y="62" width="1" height="1" fill="#000"/><rect x="347" y="62" width="1" height="1" fill="#000"/><rect x="348" y="62" width="1" height="1" fill="#ffffff"/><rect x="349" y="62" width="1" height="1" fill="#ffffff"/><rect x="350" y="62" width="1" height="1" fill="#000"/><rect x="351" y="62" width="1" height="1" fill="#ffffff"/><rect x="352" y="62" width="1" height="1" fill="#000"/><rect x="353" y="62" width="1" height="1" fill="#ffffff"/><rect x="354" y="62" width="1" height="1" fill="#000"/><rect x="355" y="62" width="1" height="1" fill="#000"/><rect x="356" y="62" width="1" height="1" fill="#ffffff"/><rect x="357" y="62" width="1" height="1" fill="#000"/><rect x="348" y="63" width="1" height="1" fill="#000"/><rect x="349" y="63" width="1" height="1" fill="#ffffff"/><rect x="350" y="63" width="1" height="1" fill="#ffffff"/><rect x="351" y="63" width="1" height="1" fill="#ffffff"/><rect x="352" y="63" width="1" height="1" fill="#ffffff"/><rect x="353" y="63" width="1" height="1" fill="#ffffff"/><rect x="354" y="63" width="1" height="1" fill="#ffffff"/><rect x="355" y="63" width="1" height="1" fill="#ffffff"/><rect x="356" y="63" width="1" height="1" fill="#ffffff"/><rect x="357" y="63" width="1" height="1" fill="#000"/><rect x="348" y="64" width="1" height="1" fill="#000"/><rect x="349" y="64" width="1" height="1" fill="#000"/><rect x="350" y="64" width="1" height="1" fill="#000"/><rect x="351" y="64" width="1" height="1" fill="#000"/><rect x="352" y="64" width="1" height="1" fill="#000"/><rect x="353" y="64" width="1" height="1" fill="#000"/><rect x="354" y="64" width="1" height="1" fill="#000"/><rect x="355" y="64" width="1" height="1" fill="#000"/><rect x="356" y="64" width="1" height="1" fill="#000"/><rect x="357" y="64" width="1" height="1" fill="#000"/><rect x="425" y="49" width="1" height="1" fill="#000"/><rect x="426" y="49" width="1" height="1" fill="#000"/><rect x="427" y="49" width="1" height="1" fill="#000"/><rect x="428" y="49" width="1" height="1" fill="#000"/><rect x="429" y="49" width="1" height="1" fill="#000"/><rect x="425" y="50" width="1" height="1" fill="#000"/><rect x="426" y="50" width="1" height="1" fill="#ffffff"/><rect x="427" y="50" width="1" height="1" fill="#ffffff"/><rect x="428" y="50" width="1" height="1" fill="#ffffff"/><rect x="429" y="50" width="1" height="1" fill="#000"/><rect x="422" y="51" width="1" height="1" fill="#000"/><rect x="423" y="51" width="1" height="1" fill="#000"/><rect x="424" y="51" width="1" height="1" fill="#000"/><rect x="425" y="51" width="1" height="1" fill="#000"/><rect x="426" y="51" width="1" height="1" fill="#000"/><rect x="427" y="51" width="1" height="1" fill="#000"/><rect x="428" y="51" width="1" height="1" fill="#000"/><rect x="429" y="51" width="1" height="1" fill="#000"/><rect x="430" y="51" width="1" height="1" fill="#000"/><rect x="431" y="51" width="1" height="1" fill="#000"/><rect x="432" y="51" width="1" height="1" fill="#000"/><rect x="422" y="52" width="1" height="1" fill="#000"/><rect x="423" y="52" width="1" height="1" fill="#ffffff"/><rect x="424" y="52" width="1" height="1" fill="#ffffff"/><rect x="425" y="52" width="1" height="1" fill="#ffffff"/><rect x="426" y="52" width="1" height="1" fill="#ffffff"/><rect x="427" y="52" width="1" height="1" fill="#ffffff"/><rect x="428" y="52" width="1" height="1" fill="#ffffff"/><rect x="429" y="52" width="1" height="1" fill="#ffffff"/><rect x="430" y="52" width="1" height="1" fill="#ffffff"/><rect x="431" y="52" width="1" height="1" fill="#ffffff"/><rect x="432" y="52" width="1" height="1" fill="#000"/><rect x="422" y="53" width="1" height="1" fill="#000"/><rect x="423" y="53" width="1" height="1" fill="#000"/><rect x="424" y="53" width="1" height="1" fill="#000"/><rect x="425" y="53" width="1" height="1" fill="#000"/><rect x="426" y="53" width="1" height="1" fill="#000"/><rect x="427" y="53" width="1" height="1" fill="#000"/><rect x="428" y="53" width="1" height="1" fill="#000"/><rect x="429" y="53" width="1" height="1" fill="#000"/><rect x="430" y="53" width="1" height="1" fill="#000"/><rect x="431" y="53" width="1" height="1" fill="#000"/><rect x="432" y="53" width="1" height="1" fill="#000"/><rect x="423" y="54" width="1" height="1" fill="#000"/><rect x="424" y="54" width="1" height="1" fill="#ffffff"/><rect x="425" y="54" width="1" height="1" fill="#000"/><rect x="426" y="54" width="1" height="1" fill="#ffffff"/><rect x="427" y="54" width="1" height="1" fill="#000"/><rect x="428" y="54" width="1" height="1" fill="#ffffff"/><rect x="429" y="54" width="1" height="1" fill="#000"/><rect x="430" y="54" width="1" height="1" fill="#ffffff"/><rect x="431" y="54" width="1" height="1" fill="#000"/><rect x="423" y="55" width="1" height="1" fill="#000"/><rect x="424" y="55" width="1" height="1" fill="#ffffff"/><rect x="425" y="55" width="1" height="1" fill="#000"/><rect x="426" y="55" width="1" height="1" fill="#ffffff"/><rect x="427" y="55" width="1" height="1" fill="#000"/><rect x="428" y="55" width="1" height="1" fill="#ffffff"/><rect x="429" y="55" width="1" height="1" fill="#000"/><rect x="430" y="55" width="1" height="1" fill="#ffffff"/><rect x="431" y="55" width="1" height="1" fill="#000"/><rect x="422" y="56" width="1" height="1" fill="#000"/><rect x="423" y="56" width="1" height="1" fill="#000"/><rect x="424" y="56" width="1" height="1" fill="#ffffff"/><rect x="425" y="56" width="1" height="1" fill="#000"/><rect x="426" y="56" width="1" height="1" fill="#ffffff"/><rect x="427" y="56" width="1" height="1" fill="#000"/><rect x="428" y="56" width="1" height="1" fill="#b0b0b0"/><rect x="429" y="56" width="1" height="1" fill="#000"/><rect x="430" y="56" width="1" height="1" fill="#b0b0b0"/><rect x="431" y="56" width="1" height="1" fill="#000"/><rect x="432" y="56" width="1" height="1" fill="#000"/><rect x="421" y="57" width="1" height="1" fill="#000"/><rect x="423" y="57" width="1" height="1" fill="#000"/><rect x="424" y="57" width="1" height="1" fill="#ffffff"/><rect x="425" y="57" width="1" height="1" fill="#000"/><rect x="426" y="57" width="1" height="1" fill="#ffffff"/><rect x="427" y="57" width="1" height="1" fill="#000"/><rect x="428" y="57" width="1" height="1" fill="#b0b0b0"/><rect x="429" y="57" width="1" height="1" fill="#000"/><rect x="430" y="57" width="1" height="1" fill="#b0b0b0"/><rect x="431" y="57" width="1" height="1" fill="#000"/><rect x="433" y="57" width="1" height="1" fill="#000"/><rect x="423" y="58" width="1" height="1" fill="#000"/><rect x="424" y="58" width="1" height="1" fill="#ffffff"/><rect x="425" y="58" width="1" height="1" fill="#000"/><rect x="426" y="58" width="1" height="1" fill="#ffffff"/><rect x="427" y="58" width="1" height="1" fill="#000"/><rect x="428" y="58" width="1" height="1" fill="#b0b0b0"/><rect x="429" y="58" width="1" height="1" fill="#000"/><rect x="430" y="58" width="1" height="1" fill="#b0b0b0"/><rect x="431" y="58" width="1" height="1" fill="#000"/><rect x="423" y="59" width="1" height="1" fill="#000"/><rect x="424" y="59" width="1" height="1" fill="#ffffff"/><rect x="425" y="59" width="1" height="1" fill="#000"/><rect x="426" y="59" width="1" height="1" fill="#ffffff"/><rect x="427" y="59" width="1" height="1" fill="#000"/><rect x="428" y="59" width="1" height="1" fill="#ffffff"/><rect x="429" y="59" width="1" height="1" fill="#000"/><rect x="430" y="59" width="1" height="1" fill="#b0b0b0"/><rect x="431" y="59" width="1" height="1" fill="#000"/><rect x="423" y="60" width="1" height="1" fill="#000"/><rect x="424" y="60" width="1" height="1" fill="#ffffff"/><rect x="425" y="60" width="1" height="1" fill="#000"/><rect x="426" y="60" width="1" height="1" fill="#ffffff"/><rect x="427" y="60" width="1" height="1" fill="#000"/><rect x="428" y="60" width="1" height="1" fill="#b0b0b0"/><rect x="429" y="60" width="1" height="1" fill="#000"/><rect x="430" y="60" width="1" height="1" fill="#b0b0b0"/><rect x="431" y="60" width="1" height="1" fill="#000"/><rect x="423" y="61" width="1" height="1" fill="#000"/><rect x="424" y="61" width="1" height="1" fill="#ffffff"/><rect x="425" y="61" width="1" height="1" fill="#000"/><rect x="426" y="61" width="1" height="1" fill="#ffffff"/><rect x="427" y="61" width="1" height="1" fill="#000"/><rect x="428" y="61" width="1" height="1" fill="#ffffff"/><rect x="429" y="61" width="1" height="1" fill="#000"/><rect x="430" y="61" width="1" height="1" fill="#b0b0b0"/><rect x="431" y="61" width="1" height="1" fill="#000"/><rect x="423" y="62" width="1" height="1" fill="#000"/><rect x="424" y="62" width="1" height="1" fill="#ffffff"/><rect x="425" y="62" width="1" height="1" fill="#000"/><rect x="426" y="62" width="1" height="1" fill="#ffffff"/><rect x="427" y="62" width="1" height="1" fill="#000"/><rect x="428" y="62" width="1" height="1" fill="#b0b0b0"/><rect x="429" y="62" width="1" height="1" fill="#000"/><rect x="430" y="62" width="1" height="1" fill="#b0b0b0"/><rect x="431" y="62" width="1" height="1" fill="#000"/><rect x="423" y="63" width="1" height="1" fill="#000"/><rect x="424" y="63" width="1" height="1" fill="#ffffff"/><rect x="425" y="63" width="1" height="1" fill="#ffffff"/><rect x="426" y="63" width="1" height="1" fill="#ffffff"/><rect x="427" y="63" width="1" height="1" fill="#ffffff"/><rect x="428" y="63" width="1" height="1" fill="#ffffff"/><rect x="429" y="63" width="1" height="1" fill="#ffffff"/><rect x="430" y="63" width="1" height="1" fill="#b0b0b0"/><rect x="431" y="63" width="1" height="1" fill="#000"/><rect x="423" y="64" width="1" height="1" fill="#000"/><rect x="424" y="64" width="1" height="1" fill="#000"/><rect x="425" y="64" width="1" height="1" fill="#000"/><rect x="426" y="64" width="1" height="1" fill="#000"/><rect x="427" y="64" width="1" height="1" fill="#000"/><rect x="428" y="64" width="1" height="1" fill="#000"/><rect x="429" y="64" width="1" height="1" fill="#000"/><rect x="430" y="64" width="1" height="1" fill="#000"/><rect x="431" y="64" width="1" height="1" fill="#000"/></svg><svg class="a" style="left:0;top:0" width="786" height="593"><path d="M502 50 L504 50 L507 53.5 L511 49.5 L513.5 49.5 L513.5 50.5 L509.5 55 L509.5 57 L512.5 60 L512.5 61.5 L510.5 63 L507 59 L503 63.3 L501 63.3 L500.3 61.5 L500.3 60 L504.5 56 L500.5 52.5 L500.5 51z" fill="#f8f8f8" stroke="#7a7a7a" stroke-width="0.9" stroke-dasharray="1.2 0.6"/><path d="M577.5 56 L580.5 59.5 L590.5 49.3 L591.8 50.5 L591.8 52.5 L581 63.5 L576.5 59 L576.5 57z" fill="#f8f8f8" stroke="#7a7a7a" stroke-width="0.9" stroke-dasharray="1.2 0.6"/></svg><svg class="a" style="left:0;top:0" width="786" height="593" shape-rendering="crispEdges"><rect x="655" y="49" width="1" height="1" fill="#000"/><rect x="656" y="49" width="1" height="1" fill="#000"/><rect x="657" y="49" width="1" height="1" fill="#000"/><rect x="658" y="49" width="1" height="1" fill="#000"/><rect x="659" y="49" width="1" height="1" fill="#000"/><rect x="660" y="49" width="1" height="1" fill="#000"/><rect x="661" y="49" width="1" height="1" fill="#000"/><rect x="662" y="49" width="1" height="1" fill="#000"/><rect x="663" y="49" width="1" height="1" fill="#000"/><rect x="655" y="50" width="1" height="1" fill="#000"/><rect x="656" y="50" width="1" height="1" fill="#000"/><rect x="657" y="50" width="1" height="1" fill="#000"/><rect x="658" y="50" width="1" height="1" fill="#ffffff"/><rect x="659" y="50" width="1" height="1" fill="#ffffff"/><rect x="660" y="50" width="1" height="1" fill="#ffffff"/><rect x="661" y="50" width="1" height="1" fill="#000"/><rect x="662" y="50" width="1" height="1" fill="#000"/><rect x="663" y="50" width="1" height="1" fill="#000"/><rect x="654" y="51" width="1" height="1" fill="#000"/><rect x="655" y="51" width="1" height="1" fill="#000"/><rect x="656" y="51" width="1" height="1" fill="#000"/><rect x="657" y="51" width="1" height="1" fill="#000"/><rect x="658" y="51" width="1" height="1" fill="#000"/><rect x="659" y="51" width="1" height="1" fill="#000"/><rect x="660" y="51" width="1" height="1" fill="#000"/><rect x="661" y="51" width="1" height="1" fill="#000"/><rect x="662" y="51" width="1" height="1" fill="#000"/><rect x="663" y="51" width="1" height="1" fill="#000"/><rect x="664" y="51" width="1" height="1" fill="#000"/><rect x="654" y="52" width="1" height="1" fill="#000"/><rect x="655" y="52" width="1" height="1" fill="#000"/><rect x="656" y="52" width="1" height="1" fill="#ffffff"/><rect x="657" y="52" width="1" height="1" fill="#ffffff"/><rect x="658" y="52" width="1" height="1" fill="#ffffff"/><rect x="659" y="52" width="1" height="1" fill="#ffffff"/><rect x="660" y="52" width="1" height="1" fill="#ffffff"/><rect x="661" y="52" width="1" height="1" fill="#ffffff"/><rect x="662" y="52" width="1" height="1" fill="#ffffff"/><rect x="663" y="52" width="1" height="1" fill="#000"/><rect x="664" y="52" width="1" height="1" fill="#000"/><rect x="654" y="53" width="1" height="1" fill="#000"/><rect x="655" y="53" width="1" height="1" fill="#ffffff"/><rect x="656" y="53" width="1" height="1" fill="#000"/><rect x="657" y="53" width="1" height="1" fill="#000"/><rect x="658" y="53" width="1" height="1" fill="#000"/><rect x="659" y="53" width="1" height="1" fill="#000"/><rect x="660" y="53" width="1" height="1" fill="#000"/><rect x="661" y="53" width="1" height="1" fill="#000"/><rect x="662" y="53" width="1" height="1" fill="#000"/><rect x="663" y="53" width="1" height="1" fill="#ffffff"/><rect x="664" y="53" width="1" height="1" fill="#000"/><rect x="654" y="54" width="1" height="1" fill="#000"/><rect x="655" y="54" width="1" height="1" fill="#000"/><rect x="656" y="54" width="1" height="1" fill="#ffffff"/><rect x="657" y="54" width="1" height="1" fill="#ffffff"/><rect x="658" y="54" width="1" height="1" fill="#ffffff"/><rect x="659" y="54" width="1" height="1" fill="#ffffff"/><rect x="660" y="54" width="1" height="1" fill="#ffffff"/><rect x="661" y="54" width="1" height="1" fill="#ffffff"/><rect x="662" y="54" width="1" height="1" fill="#ffffff"/><rect x="663" y="54" width="1" height="1" fill="#000"/><rect x="664" y="54" width="1" height="1" fill="#000"/><rect x="654" y="55" width="1" height="1" fill="#000"/><rect x="655" y="55" width="1" height="1" fill="#ffffff"/><rect x="656" y="55" width="1" height="1" fill="#000"/><rect x="657" y="55" width="1" height="1" fill="#000"/><rect x="658" y="55" width="1" height="1" fill="#000"/><rect x="659" y="55" width="1" height="1" fill="#000"/><rect x="660" y="55" width="1" height="1" fill="#000"/><rect x="661" y="55" width="1" height="1" fill="#000"/><rect x="662" y="55" width="1" height="1" fill="#000"/><rect x="663" y="55" width="1" height="1" fill="#ffffff"/><rect x="664" y="55" width="1" height="1" fill="#000"/><rect x="654" y="56" width="1" height="1" fill="#000"/><rect x="655" y="56" width="1" height="1" fill="#000"/><rect x="656" y="56" width="1" height="1" fill="#ffffff"/><rect x="657" y="56" width="1" height="1" fill="#ffffff"/><rect x="658" y="56" width="1" height="1" fill="#ffffff"/><rect x="659" y="56" width="1" height="1" fill="#ffffff"/><rect x="660" y="56" width="1" height="1" fill="#ffffff"/><rect x="661" y="56" width="1" height="1" fill="#ffffff"/><rect x="662" y="56" width="1" height="1" fill="#ffffff"/><rect x="663" y="56" width="1" height="1" fill="#000"/><rect x="664" y="56" width="1" height="1" fill="#000"/><rect x="655" y="57" width="1" height="1" fill="#000"/><rect x="656" y="57" width="1" height="1" fill="#000"/><rect x="657" y="57" width="1" height="1" fill="#000"/><rect x="658" y="57" width="1" height="1" fill="#000"/><rect x="659" y="57" width="1" height="1" fill="#000"/><rect x="660" y="57" width="1" height="1" fill="#000"/><rect x="661" y="57" width="1" height="1" fill="#000"/><rect x="662" y="57" width="1" height="1" fill="#000"/><rect x="663" y="57" width="1" height="1" fill="#000"/><rect x="664" y="57" width="1" height="1" fill="#ffff00"/><rect x="655" y="58" width="1" height="1" fill="#000"/><rect x="656" y="58" width="1" height="1" fill="#ffffff"/><rect x="657" y="58" width="1" height="1" fill="#ffffff"/><rect x="658" y="58" width="1" height="1" fill="#000"/><rect x="659" y="58" width="1" height="1" fill="#000"/><rect x="660" y="58" width="1" height="1" fill="#000"/><rect x="661" y="58" width="1" height="1" fill="#ffffff"/><rect x="662" y="58" width="1" height="1" fill="#ffffff"/><rect x="663" y="58" width="1" height="1" fill="#000"/><rect x="664" y="58" width="1" height="1" fill="#000"/><rect x="665" y="58" width="1" height="1" fill="#000"/><rect x="655" y="59" width="1" height="1" fill="#000"/><rect x="656" y="59" width="1" height="1" fill="#ffffff"/><rect x="657" y="59" width="1" height="1" fill="#ffffff"/><rect x="658" y="59" width="1" height="1" fill="#ffffff"/><rect x="659" y="59" width="1" height="1" fill="#ffffff"/><rect x="660" y="59" width="1" height="1" fill="#ffffff"/><rect x="661" y="59" width="1" height="1" fill="#ffffff"/><rect x="662" y="59" width="1" height="1" fill="#ffffff"/><rect x="663" y="59" width="1" height="1" fill="#000"/><rect x="665" y="59" width="1" height="1" fill="#000"/><rect x="666" y="59" width="1" height="1" fill="#000"/><rect x="655" y="60" width="1" height="1" fill="#000"/><rect x="656" y="60" width="1" height="1" fill="#ffffff"/><rect x="657" y="60" width="1" height="1" fill="#000"/><rect x="658" y="60" width="1" height="1" fill="#000"/><rect x="659" y="60" width="1" height="1" fill="#000"/><rect x="660" y="60" width="1" height="1" fill="#000"/><rect x="661" y="60" width="1" height="1" fill="#000"/><rect x="662" y="60" width="1" height="1" fill="#ffffff"/><rect x="663" y="60" width="1" height="1" fill="#000"/><rect x="666" y="60" width="1" height="1" fill="#000"/><rect x="667" y="60" width="1" height="1" fill="#000"/><rect x="655" y="61" width="1" height="1" fill="#000"/><rect x="656" y="61" width="1" height="1" fill="#ffffff"/><rect x="657" y="61" width="1" height="1" fill="#ffffff"/><rect x="658" y="61" width="1" height="1" fill="#ffffff"/><rect x="659" y="61" width="1" height="1" fill="#ffffff"/><rect x="660" y="61" width="1" height="1" fill="#ffffff"/><rect x="661" y="61" width="1" height="1" fill="#ffffff"/><rect x="662" y="61" width="1" height="1" fill="#ffffff"/><rect x="663" y="61" width="1" height="1" fill="#000"/><rect x="666" y="61" width="1" height="1" fill="#000"/><rect x="667" y="61" width="1" height="1" fill="#000"/><rect x="655" y="62" width="1" height="1" fill="#000"/><rect x="656" y="62" width="1" height="1" fill="#000"/><rect x="657" y="62" width="1" height="1" fill="#000"/><rect x="658" y="62" width="1" height="1" fill="#000"/><rect x="659" y="62" width="1" height="1" fill="#000"/><rect x="660" y="62" width="1" height="1" fill="#000"/><rect x="661" y="62" width="1" height="1" fill="#000"/><rect x="662" y="62" width="1" height="1" fill="#000"/><rect x="663" y="62" width="1" height="1" fill="#000"/><rect x="667" y="62" width="1" height="1" fill="#000"/><rect x="668" y="62" width="1" height="1" fill="#000"/><rect x="655" y="63" width="1" height="1" fill="#000"/><rect x="656" y="63" width="1" height="1" fill="#000"/><rect x="657" y="63" width="1" height="1" fill="#000"/><rect x="658" y="63" width="1" height="1" fill="#000"/><rect x="659" y="63" width="1" height="1" fill="#000"/><rect x="660" y="63" width="1" height="1" fill="#000"/><rect x="661" y="63" width="1" height="1" fill="#000"/><rect x="662" y="63" width="1" height="1" fill="#000"/><rect x="663" y="63" width="1" height="1" fill="#000"/><rect x="668" y="63" width="1" height="1" fill="#000"/><rect x="669" y="63" width="1" height="1" fill="#000"/><rect x="669" y="64" width="1" height="1" fill="#000"/><rect x="739" y="49" width="1" height="1" fill="#00ffff"/><rect x="740" y="49" width="1" height="1" fill="#00ffff"/><rect x="741" y="49" width="1" height="1" fill="#00ffff"/><rect x="742" y="49" width="1" height="1" fill="#00ffff"/><rect x="743" y="49" width="1" height="1" fill="#00ffff"/><rect x="737" y="50" width="1" height="1" fill="#00ffff"/><rect x="738" y="50" width="1" height="1" fill="#00ffff"/><rect x="739" y="50" width="1" height="1" fill="#008080"/><rect x="740" y="50" width="1" height="1" fill="#008080"/><rect x="741" y="50" width="1" height="1" fill="#008080"/><rect x="742" y="50" width="1" height="1" fill="#008080"/><rect x="743" y="50" width="1" height="1" fill="#008080"/><rect x="744" y="50" width="1" height="1" fill="#008080"/><rect x="735" y="51" width="1" height="1" fill="#00ffff"/><rect x="736" y="51" width="1" height="1" fill="#00ffff"/><rect x="737" y="51" width="1" height="1" fill="#008080"/><rect x="738" y="51" width="1" height="1" fill="#008080"/><rect x="739" y="51" width="1" height="1" fill="#000080"/><rect x="740" y="51" width="1" height="1" fill="#000080"/><rect x="741" y="51" width="1" height="1" fill="#000080"/><rect x="742" y="51" width="1" height="1" fill="#008080"/><rect x="743" y="51" width="1" height="1" fill="#008080"/><rect x="744" y="51" width="1" height="1" fill="#008080"/><rect x="745" y="51" width="1" height="1" fill="#000080"/><rect x="735" y="52" width="1" height="1" fill="#00ffff"/><rect x="736" y="52" width="1" height="1" fill="#008080"/><rect x="737" y="52" width="1" height="1" fill="#008080"/><rect x="738" y="52" width="1" height="1" fill="#000080"/><rect x="742" y="52" width="1" height="1" fill="#008080"/><rect x="743" y="52" width="1" height="1" fill="#008080"/><rect x="744" y="52" width="1" height="1" fill="#008080"/><rect x="745" y="52" width="1" height="1" fill="#000080"/><rect x="736" y="53" width="1" height="1" fill="#000080"/><rect x="737" y="53" width="1" height="1" fill="#000080"/><rect x="741" y="53" width="1" height="1" fill="#00ffff"/><rect x="742" y="53" width="1" height="1" fill="#008080"/><rect x="743" y="53" width="1" height="1" fill="#008080"/><rect x="744" y="53" width="1" height="1" fill="#000080"/><rect x="740" y="54" width="1" height="1" fill="#00ffff"/><rect x="741" y="54" width="1" height="1" fill="#008080"/><rect x="742" y="54" width="1" height="1" fill="#008080"/><rect x="743" y="54" width="1" height="1" fill="#000080"/><rect x="739" y="55" width="1" height="1" fill="#00ffff"/><rect x="740" y="55" width="1" height="1" fill="#008080"/><rect x="741" y="55" width="1" height="1" fill="#008080"/><rect x="742" y="55" width="1" height="1" fill="#000080"/><rect x="738" y="56" width="1" height="1" fill="#00ffff"/><rect x="739" y="56" width="1" height="1" fill="#008080"/><rect x="740" y="56" width="1" height="1" fill="#008080"/><rect x="741" y="56" width="1" height="1" fill="#000080"/><rect x="738" y="57" width="1" height="1" fill="#00ffff"/><rect x="739" y="57" width="1" height="1" fill="#008080"/><rect x="740" y="57" width="1" height="1" fill="#008080"/><rect x="741" y="57" width="1" height="1" fill="#000080"/><rect x="738" y="58" width="1" height="1" fill="#00ffff"/><rect x="739" y="58" width="1" height="1" fill="#008080"/><rect x="740" y="58" width="1" height="1" fill="#008080"/><rect x="741" y="58" width="1" height="1" fill="#000080"/><rect x="738" y="59" width="1" height="1" fill="#008080"/><rect x="739" y="59" width="1" height="1" fill="#008080"/><rect x="740" y="59" width="1" height="1" fill="#008080"/><rect x="741" y="59" width="1" height="1" fill="#000080"/><rect x="739" y="60" width="1" height="1" fill="#000080"/><rect x="740" y="60" width="1" height="1" fill="#000080"/><rect x="739" y="62" width="1" height="1" fill="#00ffff"/><rect x="740" y="62" width="1" height="1" fill="#00ffff"/><rect x="741" y="62" width="1" height="1" fill="#008080"/><rect x="738" y="63" width="1" height="1" fill="#00ffff"/><rect x="739" y="63" width="1" height="1" fill="#008080"/><rect x="740" y="63" width="1" height="1" fill="#008080"/><rect x="741" y="63" width="1" height="1" fill="#000080"/><rect x="739" y="64" width="1" height="1" fill="#000080"/><rect x="740" y="64" width="1" height="1" fill="#000080"/><rect x="741" y="64" width="1" height="1" fill="#008080"/></svg>
<div class="t" id="title" style="left:30.00px;top:9.00px;font-weight:normal;font-size:12px;color:#000;letter-spacing:-0.208px">Enter Payments To Vendors</div>
<div class="t" id="tb_find" style="left:31.00px;top:69.00px;font-weight:bold;font-size:12px;color:#000;letter-spacing:-0.467px;-webkit-text-stroke:0.25px currentColor">Find</div>
<div class="t" id="tb_prior" style="left:107.00px;top:62.00px;font-weight:bold;font-size:12px;color:#000;letter-spacing:-0.800px;-webkit-text-stroke:0.25px currentColor">Prior</div>
<div class="t" id="tb_pay1" style="left:96.00px;top:75.00px;font-weight:bold;font-size:12px;color:#000;letter-spacing:-0.500px;-webkit-text-stroke:0.25px currentColor">Payment</div>
<div class="t" id="tb_next" style="left:183.00px;top:62.00px;font-weight:bold;font-size:12px;color:#000;letter-spacing:-0.467px;-webkit-text-stroke:0.25px currentColor">Next</div>
<div class="t" id="tb_pay2" style="left:172.00px;top:75.00px;font-weight:bold;font-size:12px;color:#000;letter-spacing:-0.500px;-webkit-text-stroke:0.25px currentColor">Payment</div>
<div class="t" id="tb_add" style="left:261.00px;top:68.00px;font-weight:bold;font-size:12px;color:#000;letter-spacing:-0.650px;-webkit-text-stroke:0.25px currentColor">Add</div>
<div class="t" id="tb_change" style="left:329.00px;top:69.00px;font-weight:bold;font-size:12px;color:#000;letter-spacing:-0.400px;-webkit-text-stroke:0.25px currentColor">Change</div>
<div class="t" id="tb_delete" style="left:410.00px;top:69.00px;font-weight:bold;font-size:12px;color:#000;letter-spacing:0.000px;-webkit-text-stroke:0.25px currentColor">Delete</div>
<div class="t" id="tb_cancel" style="left:487.00px;top:70.00px;font-weight:bold;font-size:12px;color:#a0a0a0;letter-spacing:-0.200px;-webkit-text-stroke:0.25px currentColor;text-shadow:1px 1px 0 #fff">Cancel</div>
<div class="t" id="tb_save" style="left:570.00px;top:70.00px;font-weight:bold;font-size:12px;color:#a0a0a0;letter-spacing:0.000px;-webkit-text-stroke:0.25px currentColor;text-shadow:1px 1px 0 #fff">Save</div>
<div class="t" id="tb_options" style="left:641.00px;top:69.00px;font-weight:bold;font-size:12px;color:#000;letter-spacing:-0.500px;-webkit-text-stroke:0.25px currentColor">Options</div>
<div class="t" id="tb_help" style="left:728.00px;top:70.00px;font-weight:bold;font-size:12px;color:#000;letter-spacing:-0.333px;-webkit-text-stroke:0.25px currentColor">Help</div>
<div class="t" id="tab1" style="left:9.00px;top:101.00px;font-weight:bold;font-size:12px;color:#000;letter-spacing:0.158px;-webkit-text-stroke:0.25px currentColor">VENDOR PAYMENT BATCH</div>
<div class="t" id="tab2" style="left:182.00px;top:101.00px;font-weight:bold;font-size:12px;color:#000;letter-spacing:0.214px;-webkit-text-stroke:0.25px currentColor">VENDOR PAYMENTS</div>
<div class="t" id="tab3" style="left:318.00px;top:99.00px;font-weight:bold;font-size:12px;color:#000;letter-spacing:0.250px;-webkit-text-stroke:0.25px currentColor">VENDOR PAYMENT DETAIL</div>
<div class="t" id="lbl_checkno" style="left:28.00px;top:134.00px;font-weight:bold;font-size:12px;color:#000;letter-spacing:-0.273px;-webkit-text-stroke:0.25px currentColor">Check Number</div>
<div class="t" id="val_checkno" style="left:119.00px;top:130.00px;font-weight:bold;font-size:12px;color:#fff;letter-spacing:0.250px;-webkit-text-stroke:0.25px currentColor">12053</div>
<div class="t" id="lbl_enterdisc" style="left:331.00px;top:132.00px;font-weight:bold;font-size:12px;color:#000;letter-spacing:-0.231px;-webkit-text-stroke:0.25px currentColor">Enter Discount</div>
<div class="t" id="lbl_disc" style="left:498.00px;top:133.00px;font-weight:bold;font-size:12px;color:#000;letter-spacing:-0.357px;-webkit-text-stroke:0.25px currentColor">Discount</div>
<div class="t" id="val_disc" style="left:599.00px;top:129.00px;font-weight:bold;font-size:12px;color:#000;letter-spacing:0.250px;-webkit-text-stroke:0.25px currentColor">.00</div>
<div class="t" id="company" style="left:119.00px;top:159.00px;font-weight:bold;font-size:12px;color:#000;letter-spacing:-0.150px;-webkit-text-stroke:0.25px currentColor">Lynx Propane Software</div>
<div class="t" id="checknum" style="left:526.00px;top:157.00px;font-weight:bold;font-size:12px;color:#000;letter-spacing:0.250px;-webkit-text-stroke:0.25px currentColor">12053</div>
<div class="t" id="lbl_date" style="left:454.00px;top:189.00px;font-weight:bold;font-size:12px;color:#000;letter-spacing:0.000px;-webkit-text-stroke:0.25px currentColor">Date</div>
<div class="t" id="val_date" style="left:489.00px;top:187.00px;font-weight:bold;font-size:12px;color:#000;letter-spacing:0.778px;-webkit-text-stroke:0.25px currentColor">06/20/2019</div>
<div class="t" id="lbl_pay" style="left:30.00px;top:224.00px;font-weight:bold;font-size:12px;color:#000;letter-spacing:0.000px;-webkit-text-stroke:0.25px currentColor">Pay to the</div>
<div class="t" id="lbl_order" style="left:30.00px;top:237.00px;font-weight:bold;font-size:12px;color:#000;letter-spacing:-0.375px;-webkit-text-stroke:0.25px currentColor">Order of:</div>
<div class="t" id="addr1" style="left:119.00px;top:248.00px;font-weight:normal;font-size:11px;color:#000;letter-spacing:-0.318px">PO BOX 24928</div>
<div class="t" id="addr2" style="left:118.00px;top:264.00px;font-weight:normal;font-size:11px;color:#000;letter-spacing:0.014px">SEATTLE, WA 98124-0928</div>
<div class="t" id="val_amt" style="left:569.00px;top:232.00px;font-weight:bold;font-size:12px;color:#000;letter-spacing:0.250px;-webkit-text-stroke:0.25px currentColor">32.84</div>
<div class="t" id="lbl_remain" style="left:398.00px;top:257.00px;font-weight:bold;font-size:12px;color:#000;letter-spacing:-0.235px;-webkit-text-stroke:0.25px currentColor">Remaining to apply</div>
<div class="t" id="val_remain" style="left:583.00px;top:256.00px;font-weight:bold;font-size:12px;color:#000;letter-spacing:0.000px;-webkit-text-stroke:0.25px currentColor">.00</div>
<div class="t" id="lbl_ptype" style="left:424.00px;top:286.00px;font-weight:bold;font-size:12px;color:#000;letter-spacing:-0.091px;-webkit-text-stroke:0.25px currentColor">Payment Type</div>
<div class="t" id="val_ptype" style="left:515.00px;top:283.00px;font-weight:bold;font-size:12px;color:#000;letter-spacing:-0.250px;-webkit-text-stroke:0.25px currentColor">Check</div>
<div class="t" id="lbl_for" style="left:46.00px;top:296.00px;font-weight:bold;font-size:12px;color:#000;letter-spacing:-1.500px;-webkit-text-stroke:0.25px currentColor">For</div>
<div class="t" id="val_for" style="left:72.00px;top:288.00px;font-weight:bold;font-size:12px;color:#000;letter-spacing:-0.154px;-webkit-text-stroke:0.25px currentColor">Vendor Payment</div>
<div class="t" id="lbl_comment" style="left:30.00px;top:320.00px;font-weight:bold;font-size:12px;color:#000;letter-spacing:-1.000px;-webkit-text-stroke:0.25px currentColor">Comment</div>
<div class="t" id="btn_next" style="left:57.00px;top:421.00px;font-weight:bold;font-size:12px;color:#000;letter-spacing:0.067px;-webkit-text-stroke:0.25px currentColor">Next Transaction</div>
<div class="t" id="btn_prior" style="left:57.00px;top:453.00px;font-weight:bold;font-size:12px;color:#000;letter-spacing:-0.094px;-webkit-text-stroke:0.25px currentColor">prior Transaction</div>
<div class="t" id="btn_select" style="left:202.00px;top:421.00px;font-weight:bold;font-size:12px;color:#000;letter-spacing:-0.051px;-webkit-text-stroke:0.25px currentColor">Select Invoices to Apply this Payment to</div>
<div class="t" id="status" style="left:206.00px;top:577.00px;font-weight:normal;font-size:12px;color:#000;letter-spacing:-0.214px">Account Balance: $0.00</div>
</body></html>
